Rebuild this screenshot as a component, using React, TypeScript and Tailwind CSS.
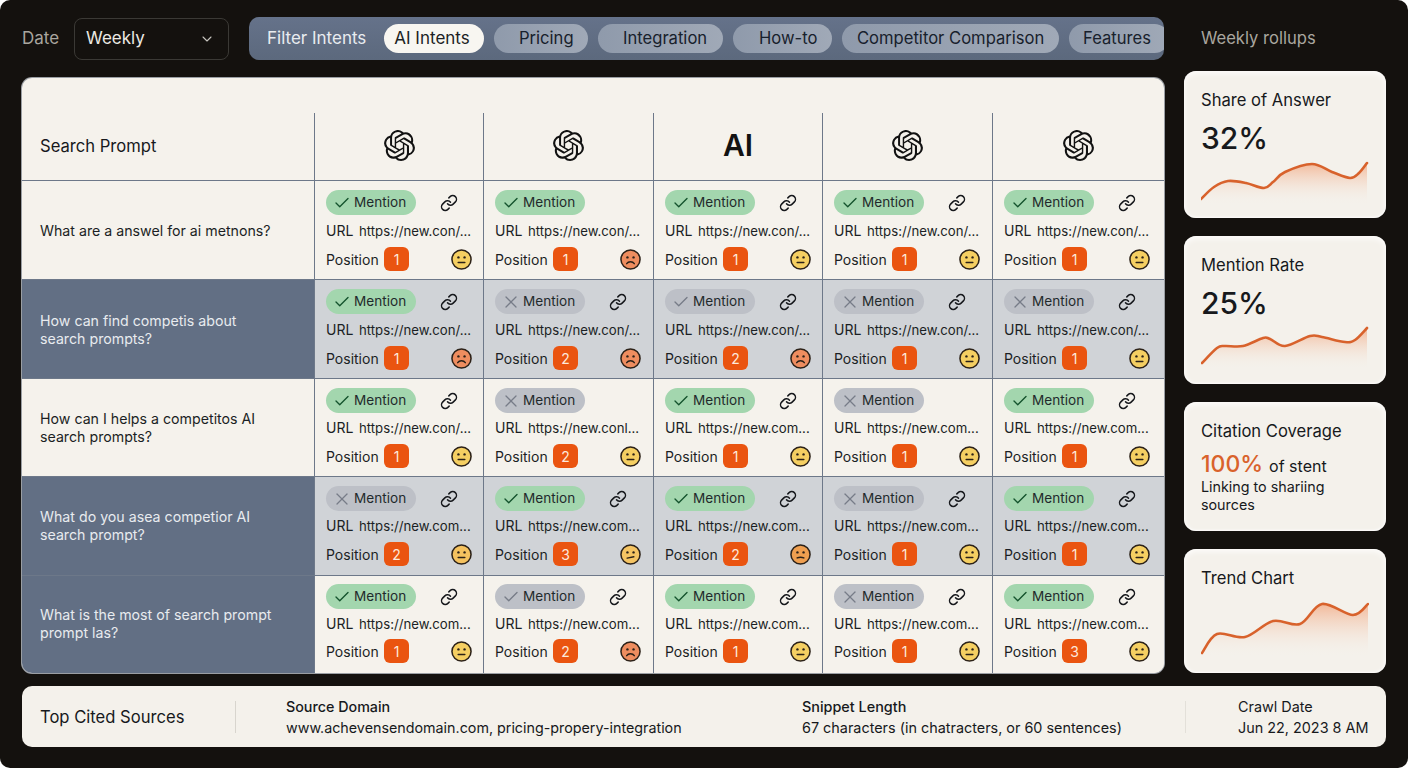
import { Check, ChevronDown, Link as LinkIcon, X } from 'lucide-react';
import { SiOpenai } from 'react-icons/si';

type Mention = 'yes' | 'no' | 'muted';
type Mood = 'ok' | 'bad' | 'warm' | 'meh' | 'low';

interface CellData {
    mention: Mention;
    link: boolean;
    url: string;
    pos: number;
    mood: Mood;
}

const con = 'https://new.con/...';
const com = 'https://new.com...';

const rows: {
    prompt: string[];
    tone: 'light' | 'dark' | 'mixed';
    promptClass: string;
    spacing: { top: string; url: string; position: string };
    cells: CellData[];
}[] = [
    {
        prompt: ['What are a answel for ai metnons?'],
        tone: 'light',
        promptClass: 'pt-[2px]',
        spacing: { top: 'pt-[9px]', url: 'mt-[6px]', position: 'mt-[6px]' },
        cells: [
            { mention: 'yes', link: true, url: con, pos: 1, mood: 'ok' },
            { mention: 'yes', link: false, url: con, pos: 1, mood: 'bad' },
            { mention: 'yes', link: true, url: con, pos: 1, mood: 'ok' },
            { mention: 'yes', link: true, url: con, pos: 1, mood: 'ok' },
            { mention: 'yes', link: true, url: con, pos: 1, mood: 'ok' },
        ],
    },
    {
        prompt: ['How can find competis about', 'search prompts?'],
        tone: 'dark',
        promptClass: 'pt-[2px]',
        spacing: { top: 'pt-[9px]', url: 'mt-[6px]', position: 'mt-[6px]' },
        cells: [
            { mention: 'yes', link: true, url: con, pos: 1, mood: 'bad' },
            { mention: 'no', link: true, url: con, pos: 2, mood: 'bad' },
            { mention: 'muted', link: true, url: con, pos: 2, mood: 'bad' },
            { mention: 'no', link: true, url: con, pos: 1, mood: 'ok' },
            { mention: 'no', link: true, url: con, pos: 1, mood: 'ok' },
        ],
    },
    {
        prompt: ['How can I helps a competitos AI', 'search prompts?'],
        tone: 'light',
        promptClass: '',
        spacing: { top: 'pt-[9px]', url: 'mt-[5px]', position: 'mt-[6px]' },
        cells: [
            { mention: 'yes', link: true, url: con, pos: 1, mood: 'ok' },
            { mention: 'no', link: false, url: 'https://new.conl...', pos: 2, mood: 'ok' },
            { mention: 'yes', link: true, url: com, pos: 1, mood: 'ok' },
            { mention: 'no', link: false, url: com, pos: 1, mood: 'ok' },
            { mention: 'yes', link: true, url: com, pos: 1, mood: 'ok' },
        ],
    },
    {
        prompt: ['What do you asea competior AI', 'search prompt?'],
        tone: 'dark',
        promptClass: '',
        spacing: { top: 'pt-[9px]', url: 'mt-[5px]', position: 'mt-[6px]' },
        cells: [
            { mention: 'no', link: true, url: com, pos: 2, mood: 'meh' },
            { mention: 'yes', link: true, url: com, pos: 3, mood: 'low' },
            { mention: 'yes', link: true, url: com, pos: 2, mood: 'warm' },
            { mention: 'no', link: true, url: com, pos: 1, mood: 'ok' },
            { mention: 'yes', link: true, url: com, pos: 1, mood: 'ok' },
        ],
    },
    {
        prompt: ['What is the most of search prompt', 'prompt las?'],
        tone: 'mixed',
        promptClass: 'pb-[2px]',
        spacing: { top: 'pt-[8px]', url: 'mt-[5px]', position: 'mt-[5px]' },
        cells: [
            { mention: 'yes', link: true, url: com, pos: 1, mood: 'ok' },
            { mention: 'muted', link: true, url: com, pos: 2, mood: 'bad' },
            { mention: 'yes', link: true, url: com, pos: 1, mood: 'ok' },
            { mention: 'no', link: true, url: com, pos: 1, mood: 'ok' },
            { mention: 'yes', link: true, url: com, pos: 3, mood: 'ok' },
        ],
    },
];

const moodFill: Record<Mood, string> = {
    ok: '#f5cf62',
    meh: '#f5c25f',
    low: '#f5c463',
    warm: '#ef9f50',
    bad: '#ee8d5f',
};

function Face({ mood }: { mood: Mood }) {
    const mouth =
        mood === 'bad'
            ? 'M7 15.4c1.8-2.8 6.2-2.8 8 0'
            : mood === 'low'
              ? 'M7.5 14.8l7-1.4'
              : mood === 'warm'
                ? 'M7.5 14.6c2-.8 5-.8 7 0'
                : 'M7.5 14.2h7';
    return (
        <svg width="21" height="21" viewBox="0 0 22 22" className="shrink-0">
            <circle cx="11" cy="11" r="10" fill={moodFill[mood]} stroke="#2b2118" strokeWidth="1.6" />
            <circle cx="7.8" cy="8.8" r="1.25" fill="#2b2118" />
            <circle cx="14.2" cy="8.8" r="1.25" fill="#2b2118" />
            <path d={mouth} fill="none" stroke="#2b2118" strokeWidth="1.5" strokeLinecap="round" />
        </svg>
    );
}

function Cell({
    cell,
    shaded,
    spacing,
}: {
    cell: CellData;
    shaded: boolean;
    spacing: { top: string; url: string; position: string };
}) {
    const green = cell.mention === 'yes';
    return (
        <div
            className={`flex flex-col border-l border-t border-[#6d7889] pl-[11px] ${spacing.top} ${shaded ? 'bg-[#d0d3d7]' : 'bg-[#f5f2ec]'}`}
        >
            <div className="flex h-[25px] items-center">
                <span
                    className={`flex h-[25px] w-[90px] shrink-0 items-center gap-[3px] rounded-full pl-[7px] text-[13.6px] leading-[25px] text-[#1f2a2c] ${green ? 'bg-[#a3d6ae]' : 'bg-[#bdc0c7]'}`}
                >
                    {cell.mention === 'no' ? (
                        <X size={20} strokeWidth={1.5} className="-mx-[1px] text-[#777c88]" />
                    ) : (
                        <Check
                            size={18}
                            strokeWidth={1.8}
                            className={green ? 'text-[#14532d]' : 'text-[#777c88]'}
                        />
                    )}
                    Mention
                </span>
                {cell.link && <LinkIcon size={18} strokeWidth={2} className="ml-[24px] text-[#16181c]" />}
            </div>
            <div className={`${spacing.url} flex h-[20px] items-baseline whitespace-nowrap text-[14px] leading-[20px] text-[#1b1f24]`}>
                <span className="w-[33px] shrink-0">URL</span>
                <span className="text-[13.2px]">{cell.url}</span>
            </div>
            <div className={`${spacing.position} flex h-[24px] w-[146px] items-center text-[14px] text-[#1b1f24]`}>
                <span className="w-[58px]">Position</span>
                <span className="flex h-[24px] w-[25px] items-center justify-center rounded-[6px] bg-[#ea5410] text-[14px] text-[#fde9dc]">
                    {cell.pos}
                </span>
                <span className="ml-auto">
                    <Face mood={cell.mood} />
                </span>
            </div>
        </div>
    );
}

// turns sample points into a smooth line
function smooth(points: number[][]) {
    let d = `M${points[0][0]} ${points[0][1]}`;
    for (let i = 0; i < points.length - 1; i++) {
        const p0 = points[i - 1] ?? points[i];
        const p1 = points[i];
        const p2 = points[i + 1];
        const p3 = points[i + 2] ?? p2;
        const c1x = p1[0] + (p2[0] - p0[0]) / 6;
        const c1y = p1[1] + (p2[1] - p0[1]) / 6;
        const c2x = p2[0] - (p3[0] - p1[0]) / 6;
        const c2y = p2[1] - (p3[1] - p1[1]) / 6;
        d += ` C${c1x.toFixed(1)} ${c1y.toFixed(1)} ${c2x.toFixed(1)} ${c2y.toFixed(1)} ${p2[0]} ${p2[1]}`;
    }
    return d;
}

function Spark({ id, points, height }: { id: string; points: number[][]; height: number }) {
    const line = smooth(points);
    const last = points[points.length - 1][0];
    return (
        <svg width="168" height={height} viewBox={`0 0 168 ${height}`} className="block">
            <defs>
                <linearGradient id={id} x1="0" y1="0" x2="0" y2="1">
                    <stop offset="0%" stopColor="#f2a57d" stopOpacity="0.75" />
                    <stop offset="100%" stopColor="#f5f2ec" stopOpacity="0" />
                </linearGradient>
            </defs>
            <path d={`${line} L${last} ${height} L${points[0][0]} ${height} Z`} fill={`url(#${id})`} />
            <path d={line} fill="none" stroke="#d8622c" strokeWidth="2.6" strokeLinecap="round" />
        </svg>
    );
}

const cardClass =
    'flex flex-col rounded-[12px] bg-[#f4f1eb] pl-[17px] shadow-[inset_0_2px_6px_rgba(255,255,255,0.9),inset_0_-1px_2px_rgba(255,255,255,0.7)] text-[#17191c]';

const pillClass =
    'flex h-[29px] shrink-0 items-center rounded-full bg-linear-to-r from-[#8f9aab] to-[#a0a9b7] text-[16.6px] text-[#18212c]';

export default function App() {
    return (
        <div className="h-[768px] w-[1408px] overflow-hidden bg-white font-['Inter',sans-serif]">
            <div className="flex h-[768px] flex-col rounded-[10px] bg-[#14110e] px-[22px] pt-[17px]">
                <div className="flex h-[656px] gap-[20px]">
                    {/* Left side */}
                    <div className="flex w-[1142px] flex-col gap-[18px]">
                        <div className="flex h-[43px] items-center">
                            <span className="w-[52px] text-[17px] text-[#a9a69f]">Date</span>
                            <div className="flex h-[42px] w-[155px] items-center justify-between rounded-[8px] border border-[#3b3935] pl-[11px] pr-[13px] text-[17px] text-[#ece9e3]">
                                Weekly
                                <ChevronDown size={16} strokeWidth={1.6} className="text-[#c9c6c0]" />
                            </div>
                            <div className="ml-[20px] flex h-[43px] w-[915px] items-center overflow-hidden rounded-[10px] bg-linear-to-b from-[#65728a] to-[#5c697d] pl-[18px]">
                                <span className="w-[117px] shrink-0 text-[17px] text-[#e9ecf0]">Filter Intents</span>
                                <div className="flex gap-[10px]">
                                    <span className="flex h-[29px] w-[100px] shrink-0 items-center justify-center rounded-full bg-[#f8f6f1] pr-[4px] text-[17px] text-[#1c1f24]">
                                        AI Intents
                                    </span>
                                    <span className={`${pillClass} w-[94px] pl-[25px]`}>Pricing</span>
                                    <span className={`${pillClass} w-[125px] pl-[25px]`}>Integration</span>
                                    <span className={`${pillClass} w-[99px] pl-[26px]`}>How-to</span>
                                    <span className={`${pillClass} w-[217px] pl-[15px]`}>Competitor Comparison</span>
                                    <span className={`${pillClass} w-[100px] pl-[14px]`}>Features</span>
                                </div>
                            </div>
                        </div>

                        <div className="grid h-[595px] grid-cols-[292px_169px_170px_169px_170px_172px] grid-rows-[102px_99px_99px_98px_99px_98px] overflow-hidden rounded-[10px] bg-[#f5f2ec] shadow-[0_0_0_1px_#9a9ea3]">
                            <div className="flex items-center pl-[18px] pt-[35px] text-[16.6px] text-[#17191c]">
                                Search Prompt
                            </div>
                            {[0, 1, 2, 3, 4].map((i) => (
                                <div
                                    key={i}
                                    className="mt-[35px] flex items-center justify-center border-l border-[#6d7889] pb-[3px] text-[#121212]"
                                >
                                    {i === 2 ? (
                                        <span className="text-[30px] font-semibold">AI</span>
                                    ) : (
                                        <SiOpenai size={31} />
                                    )}
                                </div>
                            ))}

                            {rows.map((row) => (
                                <div key={row.prompt[0]} className="contents">
                                    <div
                                        className={`flex flex-col justify-center border-t border-[#6d7889] pl-[18px] text-[14.2px] leading-[18px] ${row.promptClass} ${row.tone === 'light' ? 'bg-[#f5f2ec] text-[#1b1f24]' : 'bg-[#626f84] text-[#e8ebef]'}`}
                                    >
                                        {row.prompt.map((line) => (
                                            <span key={line}>{line}</span>
                                        ))}
                                    </div>
                                    {row.cells.map((cell, i) => (
                                        <Cell key={i} cell={cell} shaded={row.tone === 'dark'} spacing={row.spacing} />
                                    ))}
                                </div>
                            ))}
                        </div>
                    </div>

                    {/* Right side */}
                    <div className="flex w-[202px] flex-col">
                        <div className="flex h-[42px] items-center pl-[17px] text-[16.6px] text-[#a9a69f]">
                            Weekly rollups
                        </div>
                        <div className="mt-[12px] flex flex-col gap-[18px]">
                            <div className={`${cardClass} h-[147px] pt-[18px]`}>
                                <span className="text-[16.6px] leading-[22px]">Share of Answer</span>
                                <span className="mt-[8px] text-[30px] font-medium leading-[38px]">32%</span>
                                <div className="mt-[-2px]">
                                    <Spark
                                        id="share"
                                        height={50}
                                        points={[[0, 44], [13, 32], [27, 26], [45, 28], [63, 33], [72, 27], [84, 17], [111, 9], [131, 17], [149, 23], [158, 18], [166, 8]]}
                                    />
                                </div>
                            </div>
                            <div className={`${cardClass} h-[148px] pt-[18px]`}>
                                <span className="text-[16.6px] leading-[22px]">Mention Rate</span>
                                <span className="mt-[8px] text-[30px] font-medium leading-[38px]">25%</span>
                                <div className="mt-[-2px]">
                                    <Spark
                                        id="rate"
                                        height={50}
                                        points={[[1, 43], [16, 28], [24, 26], [42, 26], [62, 18], [69, 19], [84, 26], [109, 16], [121, 17], [144, 22], [154, 20], [166, 8]]}
                                    />
                                </div>
                            </div>
                            <div className={`${cardClass} h-[129px] pt-[18px]`}>
                                <span className="text-[16.6px] leading-[22px]">Citation Coverage</span>
                                <div className="mt-[8px] flex items-baseline gap-[6px]">
                                    <span className="text-[23px] font-medium leading-[28px] text-[#d9622b]">100%</span>
                                    <span className="text-[16px]">of stent</span>
                                </div>
                                <span className="text-[14.3px] leading-[18px]">Linking to shariing</span>
                                <span className="text-[14.3px] leading-[18px]">sources</span>
                            </div>
                            <div className={`${cardClass} h-[124px] pt-[18px]`}>
                                <span className="text-[16.6px] leading-[22px]">Trend Chart</span>
                                <div className="mt-[6px]">
                                    <Spark
                                        id="trend"
                                        height={62}
                                        points={[[1, 58], [16, 39], [44, 42], [72, 26], [99, 29], [121, 9], [152, 20], [167, 9]]}
                                    />
                                </div>
                            </div>
                        </div>
                    </div>
                </div>

                {/* Sources */}
                <div className="mt-[13px] flex h-[61px] items-center rounded-[10px] bg-[#f4f1eb] pl-[18px] text-[#17191c]">
                    <span className="w-[195px] pt-[1px] text-[16.6px]">Top Cited Sources</span>
                    <span className="h-[32px] w-px bg-[#d8d5ce]" />
                    <div className="ml-[50px] flex w-[516px] flex-col text-[14.3px] leading-[21px]">
                        <span className="font-medium">Source Domain</span>
                        <span>www.achevensendomain.com, pricing-propery-integration</span>
                    </div>
                    <div className="flex w-[383px] flex-col text-[14.4px] leading-[21px]">
                        <span className="font-medium">Snippet Length</span>
                        <span>67 characters (in chatracters, or 60 sentences)</span>
                    </div>
                    <span className="h-[32px] w-px bg-[#e3e0d9]" />
                    <div className="ml-[52px] flex flex-col whitespace-nowrap text-[14.4px] leading-[21px]">
                        <span>Crawl Date</span>
                        <span>Jun 22, 2023 8 AM</span>
                    </div>
                </div>
            </div>
        </div>
    );
}
